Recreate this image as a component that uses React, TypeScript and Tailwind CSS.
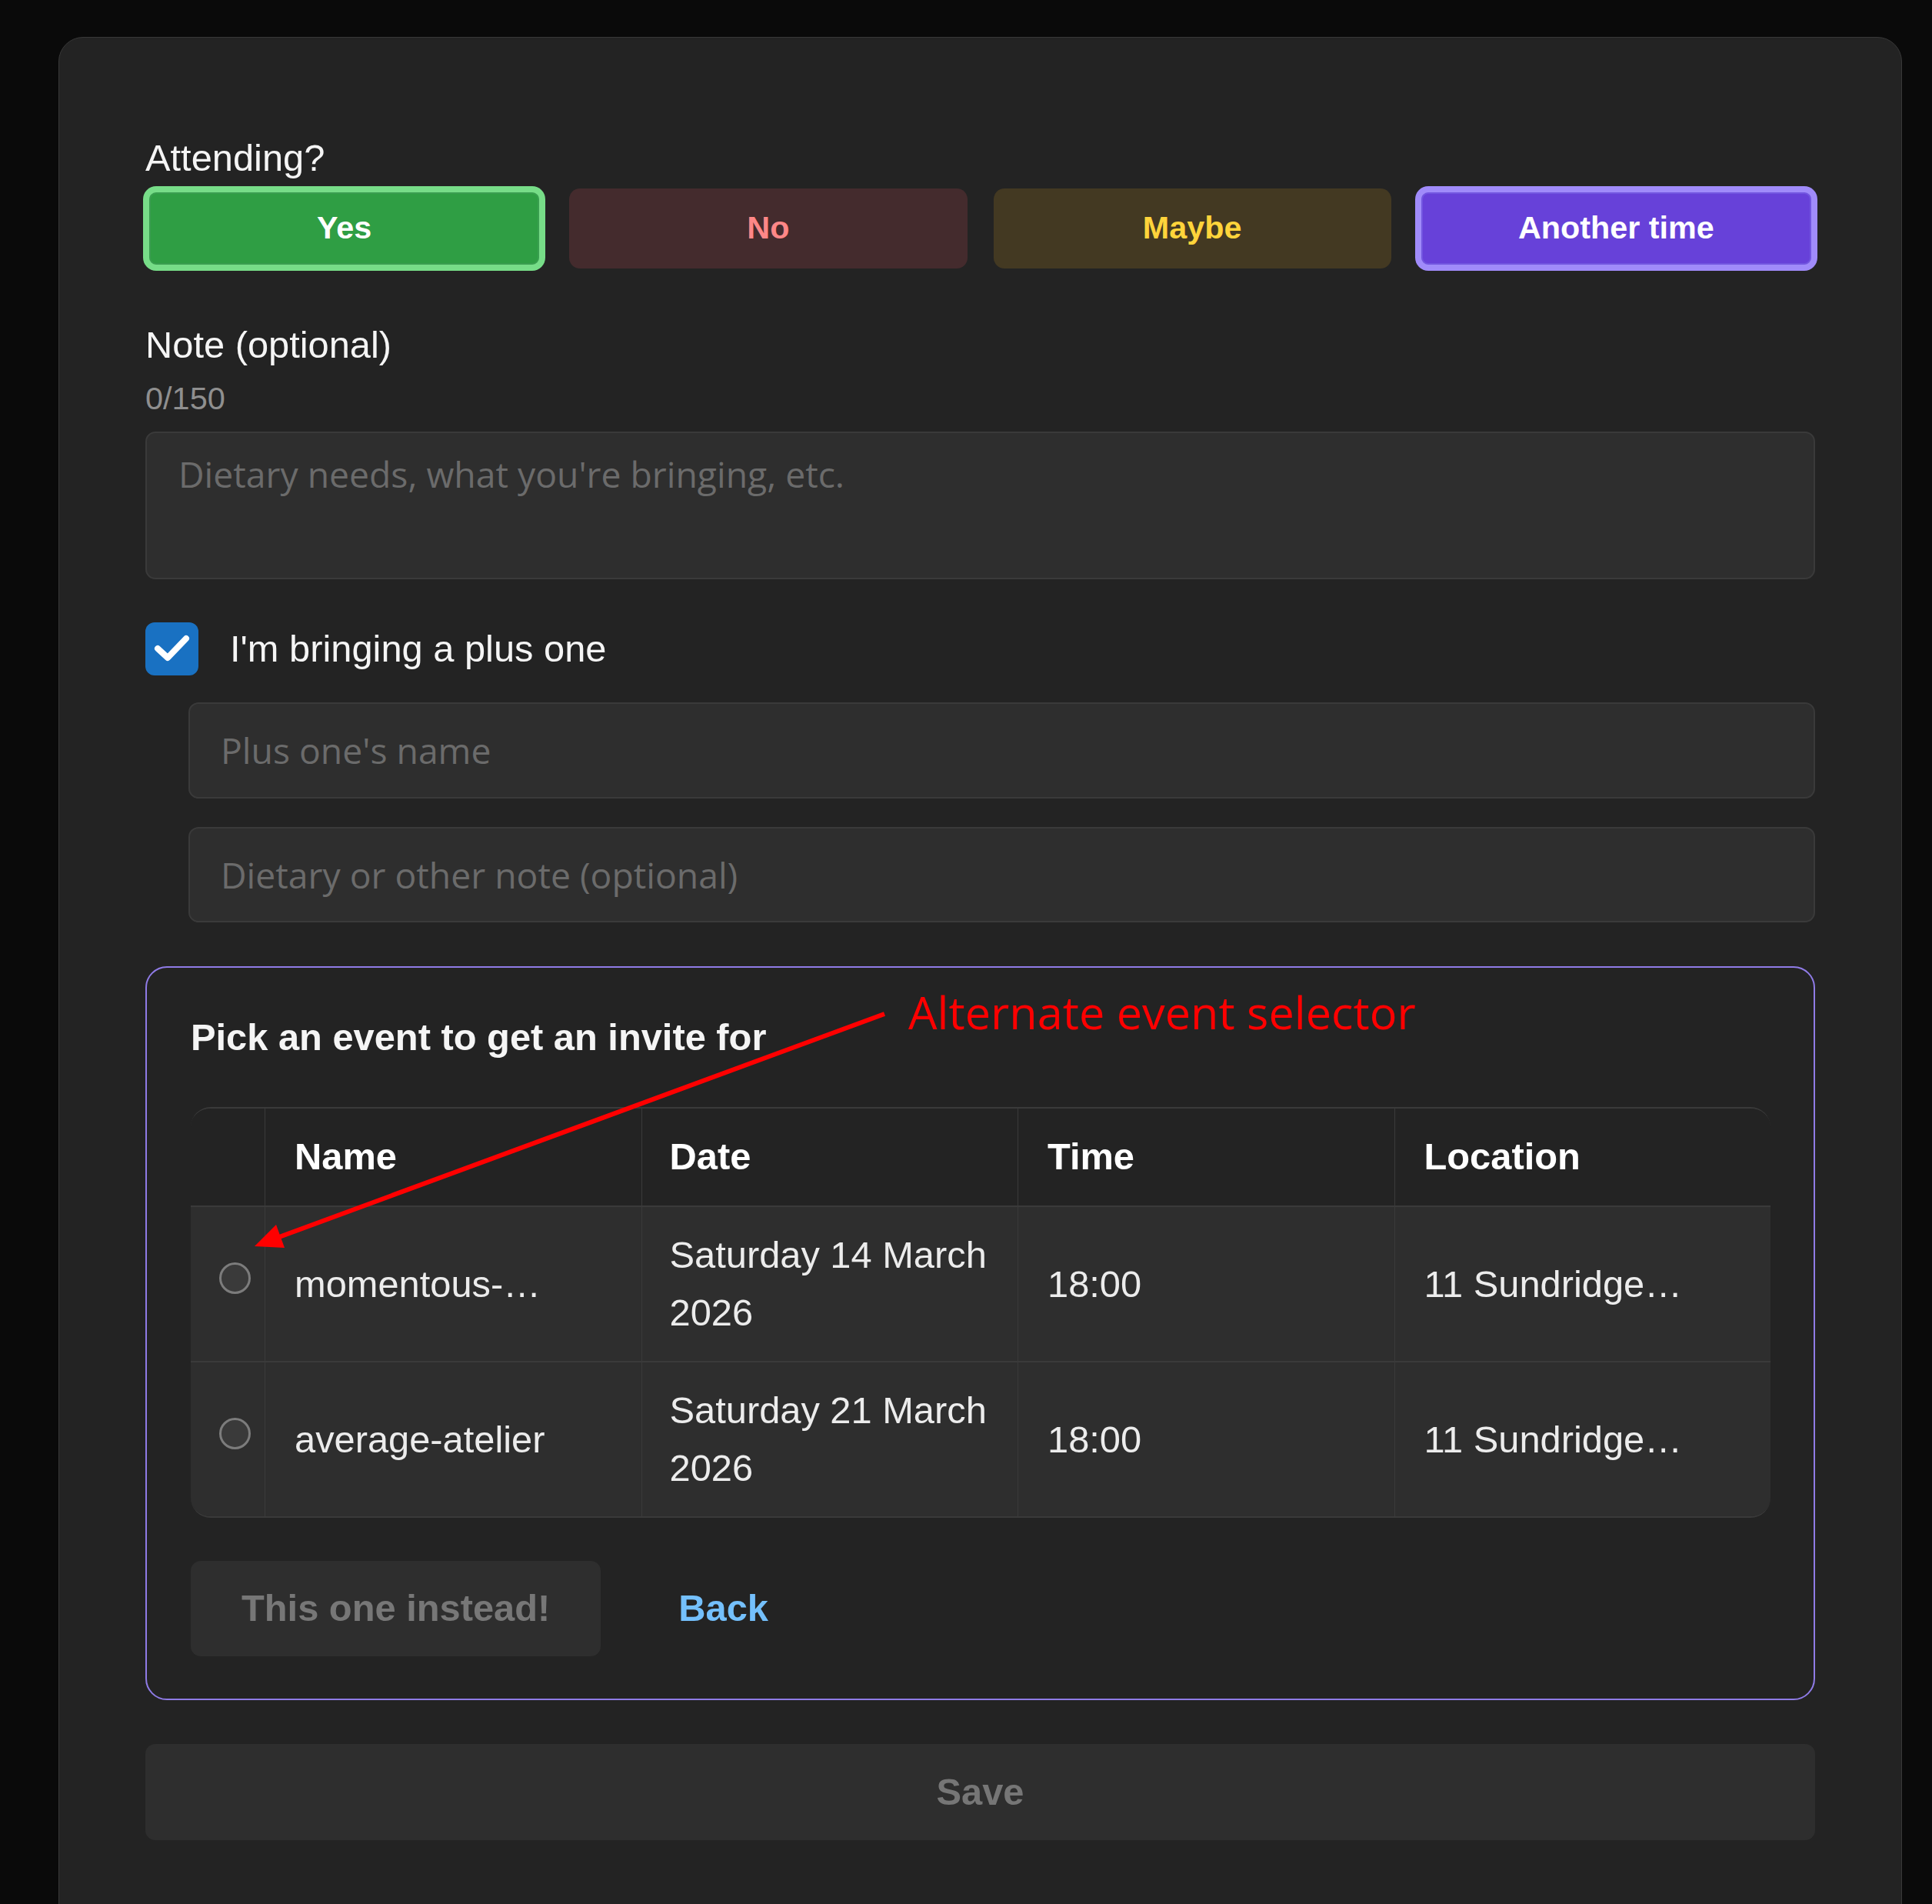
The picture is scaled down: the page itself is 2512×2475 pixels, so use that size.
import React from "react";

const rows = [
  { name: "momentous-…", d1: "Saturday 14 March", d2: "2026", time: "18:00", loc: "11 Sundridge…" },
  { name: "average-atelier", d1: "Saturday 21 March", d2: "2026", time: "18:00", loc: "11 Sundridge…" },
];

export default function App() {
  return (
    <div className="h-[2475px] overflow-hidden bg-[#0a0a0a] pl-[76px] pr-[39px] pt-[48px] font-['Liberation_Sans',Arial,sans-serif]">
      <div className="relative rounded-[32px] border border-[#383838] bg-[#232323] px-[112px] pb-[200px] pt-[129px]">
        <div className="text-[48.8px] leading-[55px] text-[#f5f5f5]">Attending?</div>
        <div className="mt-[12px] grid grid-cols-4 gap-[34px]">
          <button className="h-[104px] rounded-[14px] border-[5px] border-[#77dd88] bg-[#2f9e44] text-[41.3px] font-bold text-white shadow-[0_0_0_3px_#77dd88,inset_0_0_0_2px_#3a9e50]">
            Yes
          </button>
          <button className="h-[104px] rounded-[14px] bg-[#442b2d] text-[41.3px] font-bold text-[#ff8787]">No</button>
          <button className="h-[104px] rounded-[14px] bg-[#433922] text-[41.3px] font-bold text-[#ffd43b]">Maybe</button>
          <button className="h-[104px] rounded-[14px] border-[5px] border-[#a08bfa] bg-[#6741d9] text-[41.3px] font-bold text-white shadow-[0_0_0_3px_#a08bfa,inset_0_0_0_2px_#7256e0]">
            Another time
          </button>
        </div>

        <div className="mt-[72px] text-[48.8px] leading-[55px] text-[#f5f5f5]">Note (optional)</div>
        <div className="mt-[18px] text-[41.5px] leading-[47px] text-[#8f8f8f]">0/150</div>
        <textarea
          placeholder="Dietary needs, what you're bringing, etc."
          className="mt-[20px] block h-[192px] w-full resize-none rounded-[13px] border-2 border-[#3a3a3a] bg-[#2e2e2e] pl-[41px] pr-[40px] pt-[22px] font-['Open_Sans',sans-serif] text-[46.3px] leading-[63px] text-white outline-none placeholder:text-[#6b6b6b]"
        />

        <div className="mt-[56px] flex items-center gap-[41px]">
          <span className="flex h-[69px] w-[69px] items-center justify-center rounded-[12px] bg-[#1971c2]">
            <svg width="69" height="69" viewBox="0 0 69 69">
              <polyline points="16,34 29,46 53,21" fill="none" stroke="#ffffff" strokeWidth="8" strokeLinecap="round" strokeLinejoin="round" />
            </svg>
          </span>
          <span className="text-[48.8px] leading-[55px] text-[#f5f5f5]">I'm bringing a plus one</span>
        </div>

        <div className="ml-[56px]">
          <input
            placeholder="Plus one's name"
            className="mt-[35px] block h-[125px] w-full rounded-[13px] border-2 border-[#3a3a3a] bg-[#2e2e2e] pl-[40px] font-['Open_Sans',sans-serif] text-[46.3px] text-white outline-none placeholder:text-[#6b6b6b]"
          />
          <input
            placeholder="Dietary or other note (optional)"
            className="mt-[37px] block h-[124px] w-full rounded-[13px] border-2 border-[#3a3a3a] bg-[#2e2e2e] pl-[40px] font-['Open_Sans',sans-serif] text-[46.3px] text-white outline-none placeholder:text-[#6b6b6b]"
          />
        </div>

        <div className="mt-[57px] rounded-[28px] border-2 border-[#8f7be6] px-[57px] pb-[55px] pt-[63px]">
          <div className="text-[48.8px] font-bold leading-[55px] text-[#f5f5f5]">Pick an event to get an invite for</div>
          <div className="mt-[63px] w-[2054px] overflow-hidden rounded-[26px] border-y-2 border-[#3a3a3a]">
            <div className="grid h-[126px] grid-cols-[96px_repeat(4,minmax(0,1fr))] bg-[#232323] text-[48.8px] font-bold text-white">
              <div />
              <div className="flex items-center border-l border-[#3a3a3a] px-[38px]">Name</div>
              <div className="flex items-center border-l border-[#3a3a3a] px-[36px]">Date</div>
              <div className="flex items-center border-l border-[#3a3a3a] px-[38px]">Time</div>
              <div className="flex items-center border-l border-[#3a3a3a] px-[38px]">Location</div>
            </div>
            {rows.map((r, i) => (
              <div
                key={i}
                className="grid h-[202px] grid-cols-[96px_repeat(4,minmax(0,1fr))] border-t-2 border-[#3a3a3a] bg-[#2e2e2e] text-[48.8px] leading-[75px] text-[#ececec]"
              >
                <div className="flex items-center pl-[37px]">
                  <span className="mb-[16px] block h-[41px] w-[41px] rounded-full border-[3px] border-[#7c7c7c] bg-[#3a3a3a]" />
                </div>
                <div className="flex items-center whitespace-nowrap border-l border-[#3a3a3a] px-[38px]">{r.name}</div>
                <div className="flex flex-col justify-center whitespace-nowrap border-l border-[#3a3a3a] pl-[36px] pr-[20px]">
                  <span>{r.d1}</span>
                  <span>{r.d2}</span>
                </div>
                <div className="flex items-center border-l border-[#3a3a3a] px-[38px]">{r.time}</div>
                <div className="flex items-center whitespace-nowrap border-l border-[#3a3a3a] px-[38px]">{r.loc}</div>
              </div>
            ))}
          </div>
          <div className="mt-[56px] flex gap-[35px]">
            <button className="h-[124px] rounded-[13px] bg-[#2e2e2e] px-[66px] text-[48.8px] font-bold text-[#777777]">This one instead!</button>
            <button className="h-[124px] px-[66px] text-[48.8px] font-bold text-[#74c0fc]">Back</button>
          </div>
        </div>

        <button className="mt-[57px] block h-[125px] w-full rounded-[13px] bg-[#2e2e2e] text-[48.8px] font-bold text-[#767676]">Save</button>

        <div className="pointer-events-none absolute left-[1104px] top-[1237px] whitespace-nowrap font-['Open_Sans',sans-serif] text-[59.4px] leading-[59px] text-[#ff0000]">
          Alternate event selector
        </div>
        <svg className="pointer-events-none absolute left-0 top-0" width="2397" height="2500">
          <line x1="1073" y1="1269" x2="286" y2="1559" stroke="#ff0000" strokeWidth="6" />
          <polygon points="254,1571 293,1573 282,1543" fill="#ff0000" />
        </svg>
      </div>
    </div>
  );
}
